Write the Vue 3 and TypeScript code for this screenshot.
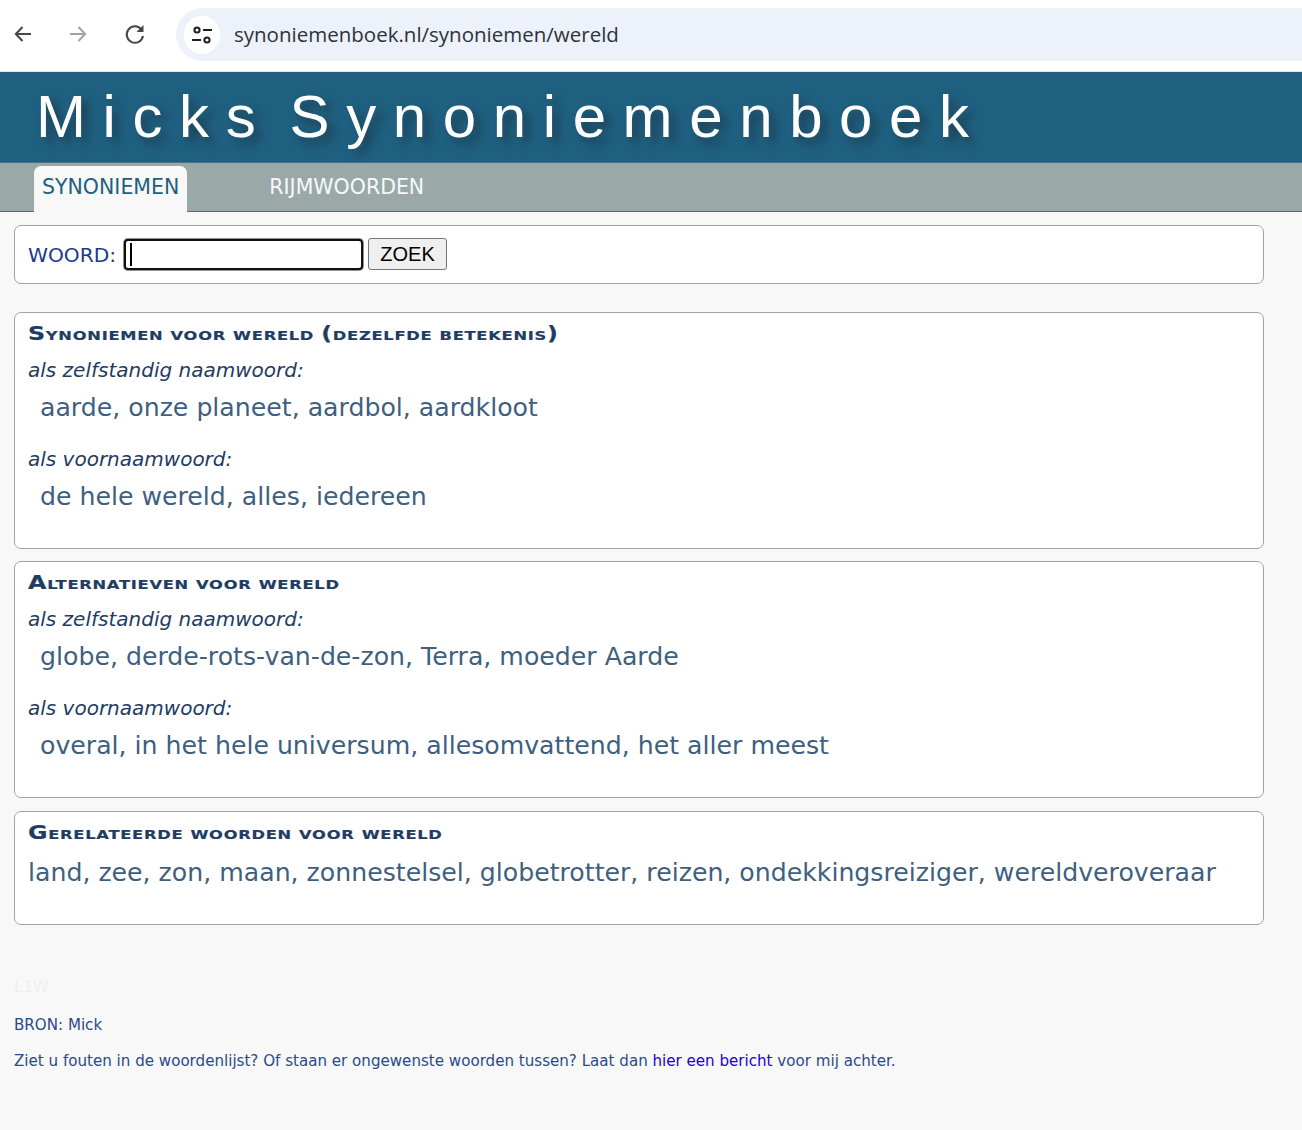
<template>
  <div class="browser-bar">
    <svg class="nav-icon" viewBox="0 0 24 24" width="24" height="24"><path d="M20 12H5M11.5 5 4.8 12l6.7 7" fill="none" stroke="#474747" stroke-width="2" /></svg>
    <svg class="nav-icon" viewBox="0 0 24 24" width="24" height="24"><path d="M4 12h15M12.5 5l6.7 7-6.7 7" fill="none" stroke="#a3a3a3" stroke-width="2" /></svg>
    <svg class="nav-icon" viewBox="0 0 24 24" width="24" height="24"><path d="M20 14a8.2 8.2 0 1 1-1.7-6.6" fill="none" stroke="#474747" stroke-width="2" /><path d="M20.5 3v7h-7z" fill="#474747" /></svg>
    <div class="address">
      <span class="site-chip">
        <svg viewBox="0 0 24 24" width="24" height="24" fill="none" stroke="#1f1f1f" stroke-width="2"><circle cx="7" cy="7" r="2.6" /><path d="M13 7h9M2 17h9" /><circle cx="17" cy="17" r="2.6" /></svg>
      </span>
      <span class="url">synoniemenboek.nl/synoniemen/wereld</span>
    </div>
  </div>

  <header class="site-header">
    <h1>Micks Synoniemenboek</h1>
  </header>

  <nav class="tabs">
    <a class="tab active">SYNONIEMEN</a>
    <a class="tab">RIJMWOORDEN</a>
  </nav>

  <main class="content">
    <form class="box search" @submit.prevent>
      <label for="woord">WOORD:</label>
      <span class="input-wrap">
        <input id="woord" type="text" />
        <span class="caret"></span>
      </span>
      <button type="submit">ZOEK</button>
    </form>

    <section v-for="section in sections" :key="section.title" class="box result">
      <h2>{{ section.title }}</h2>
      <template v-for="group in section.groups" :key="group.label">
        <p class="label">{{ group.label }}</p>
        <p class="words">{{ group.words }}</p>
      </template>
      <p v-if="section.related" class="words related">{{ section.related }}</p>
    </section>

    <footer class="foot">
      <p class="code">L1W</p>
      <p class="source">BRON: Mick</p>
      <p class="note">Ziet u fouten in de woordenlijst? Of staan er ongewenste woorden tussen? Laat dan <a href="#">hier een bericht</a> voor mij achter.</p>
    </footer>
  </main>
</template>

<script setup lang="ts">
interface Group {
  label: string
  words: string
}
interface Section {
  title: string
  groups: Group[]
  related?: string
}

const sections: Section[] = [
  {
    title: 'Synoniemen voor wereld (dezelfde betekenis)',
    groups: [
      { label: 'als zelfstandig naamwoord:', words: 'aarde, onze planeet, aardbol, aardkloot' },
      { label: 'als voornaamwoord:', words: 'de hele wereld, alles, iedereen' }
    ]
  },
  {
    title: 'Alternatieven voor wereld',
    groups: [
      { label: 'als zelfstandig naamwoord:', words: 'globe, derde-rots-van-de-zon, Terra, moeder Aarde' },
      { label: 'als voornaamwoord:', words: 'overal, in het hele universum, allesomvattend, het aller meest' }
    ]
  },
  {
    title: 'Gerelateerde woorden voor wereld',
    groups: [],
    related: 'land, zee, zon, maan, zonnestelsel, globetrotter, reizen, ondekkingsreiziger, wereldveroveraar'
  }
]
</script>

<style>
html,
body {
  margin: 0;
  background: #f8f8f8;
}
</style>

<style scoped>
.browser-bar {
  height: 72px;
  box-sizing: border-box;
  padding: 8px 0 0 11px;
  background: #fff;
  border-bottom: 1px solid #e6e6e6;
  display: flex;
  align-items: flex-start;
  overflow: hidden;
}
.nav-icon {
  margin: 14px 31px 0 0;
  flex: none;
}
.nav-icon:nth-child(2) {
  margin-right: 33px;
}
.nav-icon:nth-child(3) {
  margin-right: 29px;
}
.address {
  flex: 1;
  height: 53px;
  border-radius: 27px 0 0 27px;
  background: #ecf1fa;
  display: flex;
  align-items: center;
  padding-left: 8px;
}
.site-chip {
  width: 36px;
  height: 38px;
  border-radius: 19px;
  background: #fff;
  display: flex;
  align-items: center;
  justify-content: center;
}
.url {
  margin: -2px 0 0 14px;
  font: 20.5px "Open Sans", "Noto Sans", sans-serif;
  color: #2f3338;
}

.site-header {
  height: 91px;
  box-sizing: border-box;
  background: #1f6080;
  border-bottom: 1px solid #4d6f7f;
  padding: 10px 0 0 36px;
}
h1 {
  margin: 0;
  font: 400 60px "Liberation Sans", Arial, sans-serif;
  letter-spacing: 16.6px;
  word-spacing: -16px;
  color: #fff;
  text-shadow: 6px 6px 10px #1c3d50;
  white-space: nowrap;
}

.tabs {
  height: 49px;
  box-sizing: border-box;
  background: #9aa9a8;
  border-bottom: 1px solid #5b6b72;
  padding: 3px 0 0 34px;
  display: flex;
  gap: 74px;
  font: 20.5px "DejaVu Sans", Verdana, sans-serif;
}
.tab {
  height: 46px;
  padding: 9px 8px 0;
  box-sizing: border-box;
  color: #f8f8f8;
  border-radius: 7px 7px 0 0;
}
.tab.active {
  background: #f8f8f8;
  color: #1f6080;
}

.content {
  padding: 13px 38px 0 14px;
  color: #1f3c63;
  font-family: "DejaVu Sans", Verdana, sans-serif;
}
.box {
  background: #fff;
  border: 1px solid #9aa5a5;
  border-radius: 7px;
  box-sizing: border-box;
}
.search {
  height: 59px;
  display: flex;
  align-items: flex-start;
  padding: 12px 13px 0;
  margin-bottom: 28px;
  color: #1d3a8a;
  font-size: 20.2px;
}
.search label {
  margin: 5px 6px 0 0;
  width: 89px;
}
.input-wrap {
  position: relative;
  display: block;
  width: 241px;
  height: 33px;
  padding: 1px;
  box-sizing: border-box;
  margin-right: 4px;
}
.search input {
  display: block;
  width: 100%;
  height: 100%;
  box-sizing: border-box;
  margin: 0;
  padding: 1px 4px;
  border: 2px solid #111;
  border-radius: 4px;
  box-shadow: 0 0 0 1px #8f8f8f;
  outline: none;
  font-size: 20px;
}
.caret {
  position: absolute;
  left: 7px;
  top: 5px;
  width: 2px;
  height: 23px;
  background: #000;
}
.search button {
  height: 32px;
  width: 79px;
  padding: 0;
  border: 1px solid #767676;
  border-radius: 3px;
  background: #efefef;
  color: #000;
  font: 20px "Liberation Sans", Arial, sans-serif;
}
.result {
  height: 237px;
  margin-bottom: 12px;
  padding: 9px 13px 0;
}
.result:last-of-type {
  height: 114px;
  margin-top: 13px;
}
/* DejaVu's bold caps run narrower than the original, so widen the heading */
h2 {
  width: max-content;
  margin: 0;
  font-size: 19px;
  line-height: 22px;
  font-weight: 700;
  font-variant: small-caps;
  letter-spacing: 0.6px;
  word-spacing: -1.5px;
  white-space: nowrap;
  color: #1f3c63;
  -webkit-text-stroke: 0.2px #1f3c63;
  transform: scaleX(1.25);
  transform-origin: 0 0;
}
.label {
  margin: 12.5px 0 0;
  font-size: 20px;
  font-style: italic;
  line-height: 24px;
  color: #1f3c63;
}
h2 + .label {
  margin-top: 14px;
}
.words {
  margin: 8px 0 21px 12px;
  font-size: 25.2px;
  line-height: 36px;
  color: #3f5f80;
}
.words.related {
  margin: 12px 0 0;
  white-space: nowrap;
}
.foot {
  margin-top: 51px;
  color: #2b4a8a;
  font-size: 15.1px;
}
.foot p {
  margin: 0;
}
.code {
  font-size: 16px;
  color: #efefef;
  line-height: 22px;
}
.foot .source {
  margin-top: 18px;
  line-height: 18px;
}
.foot .note {
  margin-top: 18px;
  line-height: 18px;
}
.note a {
  color: #2200d8;
  text-decoration: none;
}
</style>
